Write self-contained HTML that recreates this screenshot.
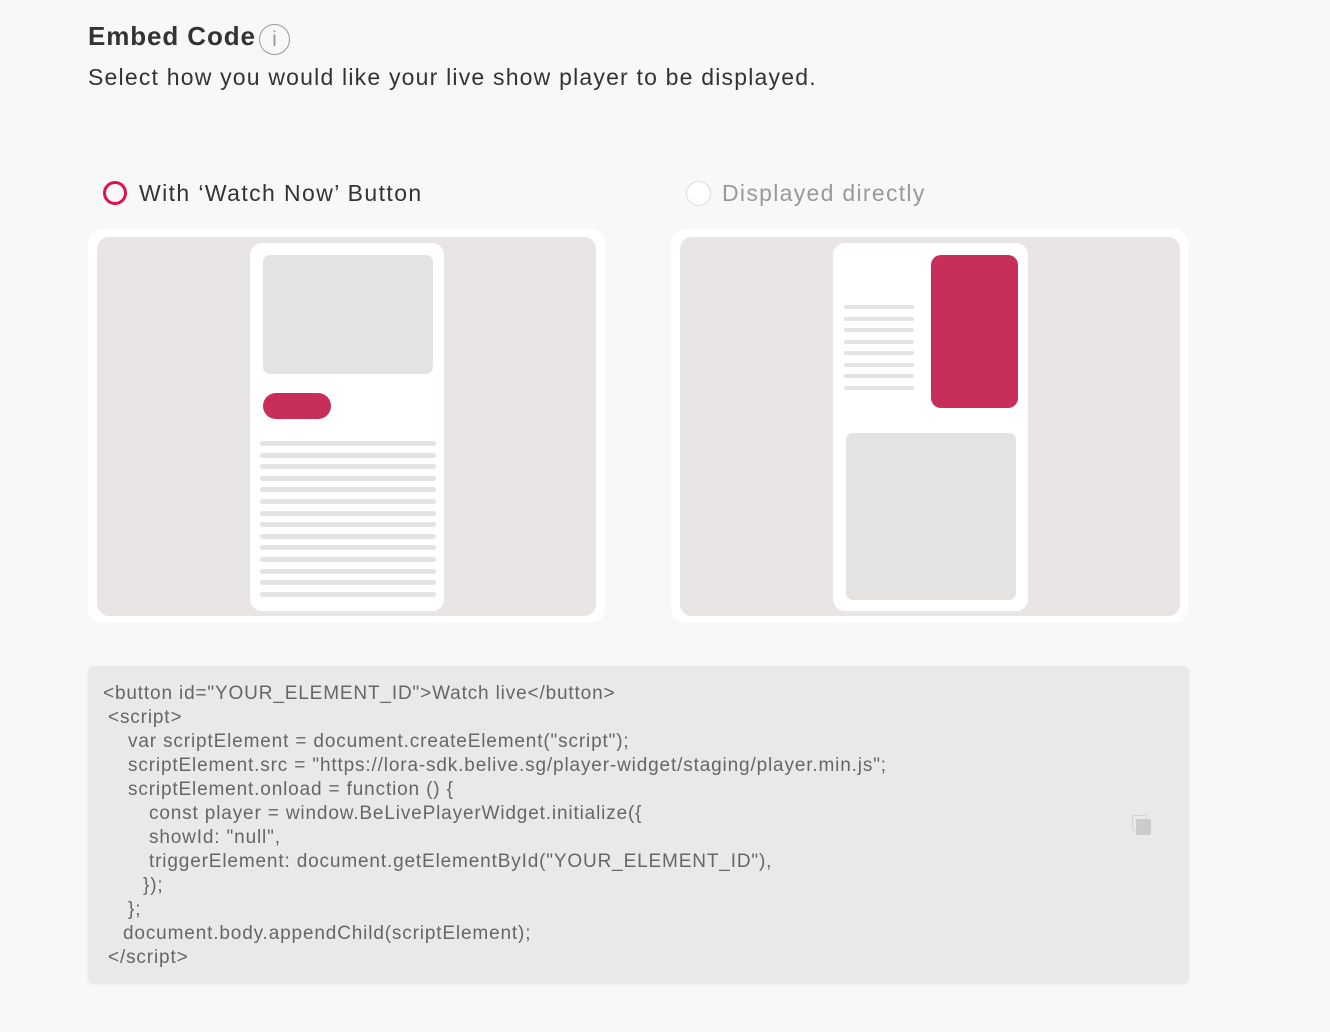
<!DOCTYPE html>
<html><head><style>
body{margin:0;width:1330px;height:1032px;background:#f8f8f8;font-family:"Liberation Sans",sans-serif;position:relative;overflow:hidden}
.a{position:absolute}
h1{position:absolute;left:88px;top:21px;margin:0;font-size:26px;font-weight:bold;color:#333;letter-spacing:0.9px}
.sub{left:88px;top:64px;font-size:23px;color:#333;letter-spacing:1.2px;white-space:nowrap}
.frame{background:#fff;border-radius:14px}
.bg{background:#e8e5e4;border-radius:12px}
.ph{background:#fff;border-radius:12px}
.g{background:#e4e3e2;border-radius:7px}
.ln{background:#e4e3e2;height:5px;border-radius:3px}
.code{left:88px;top:666px;width:1101px;height:317px;background:#e9e9e9;border-radius:6px;box-shadow:0 1px 3px rgba(0,0,0,.08)}
.c{position:absolute;font-size:19px;line-height:24px;color:#666;letter-spacing:0.85px;white-space:nowrap}
</style></head><body>
<h1>Embed Code</h1>
<div class="a" style="left:259px;top:24px;width:29px;height:29px;border:1.5px solid #999;border-radius:50%;color:#999;font-size:21px;text-align:center;line-height:29px">i</div>
<div class="a sub">Select how you would like your live show player to be displayed.</div>

<div class="a" style="left:103px;top:181px;width:18px;height:18px;border:3.5px solid #e0114f;border-radius:50%"></div>
<div class="a" style="left:139px;top:180px;font-size:23px;color:#333;letter-spacing:1.4px">With ‘Watch Now’ Button</div>
<div class="a" style="left:686px;top:181px;width:23px;height:23px;border:1.5px solid #ddd;border-radius:50%;background:#fff"></div>
<div class="a" style="left:722px;top:180px;font-size:23px;color:#999;letter-spacing:1.3px">Displayed directly</div>

<div class="a frame" style="left:88px;top:229px;width:517px;height:394px"></div>
<div class="a bg" style="left:97px;top:237px;width:499px;height:379px"></div>
<div class="a ph" style="left:250px;top:243px;width:194px;height:368px"></div>
<div class="a g" style="left:263px;top:255px;width:170px;height:119px"></div>
<div class="a" style="left:263px;top:393px;width:68px;height:26px;background:#c72e5a;border-radius:13px"></div>
<div class="a" style="left:260px;top:441px;width:176px">
<div class="ln"></div><div class="ln" style="margin-top:6.6px"></div><div class="ln" style="margin-top:6.6px"></div><div class="ln" style="margin-top:6.6px"></div><div class="ln" style="margin-top:6.6px"></div><div class="ln" style="margin-top:6.6px"></div><div class="ln" style="margin-top:6.6px"></div><div class="ln" style="margin-top:6.6px"></div><div class="ln" style="margin-top:6.6px"></div><div class="ln" style="margin-top:6.6px"></div><div class="ln" style="margin-top:6.6px"></div><div class="ln" style="margin-top:6.6px"></div><div class="ln" style="margin-top:6.6px"></div><div class="ln" style="margin-top:6.6px"></div>
</div>

<div class="a frame" style="left:671px;top:229px;width:517px;height:394px"></div>
<div class="a bg" style="left:680px;top:237px;width:500px;height:379px"></div>
<div class="a ph" style="left:833px;top:243px;width:195px;height:368px"></div>
<div class="a" style="left:931px;top:255px;width:87px;height:153px;background:#c72e5a;border-radius:10px"></div>
<div class="a g" style="left:846px;top:433px;width:170px;height:167px"></div>
<div class="a" style="left:844px;top:305px;width:70px">
<div class="ln" style="height:4px"></div><div class="ln" style="height:4px;margin-top:7.5px"></div><div class="ln" style="height:4px;margin-top:7.5px"></div><div class="ln" style="height:4px;margin-top:7.5px"></div><div class="ln" style="height:4px;margin-top:7.5px"></div><div class="ln" style="height:4px;margin-top:7.5px"></div><div class="ln" style="height:4px;margin-top:7.5px"></div><div class="ln" style="height:4px;margin-top:7.5px"></div>
</div>

<div class="a code"></div>
<div class="c" style="left:103px;top:682px">&lt;button id="YOUR_ELEMENT_ID"&gt;Watch live&lt;/button&gt;</div>
<div class="c" style="left:108px;top:706px">&lt;script&gt;</div>
<div class="c" style="left:128px;top:730px">var scriptElement = document.createElement("script");</div>
<div class="c" style="left:128px;top:754px">scriptElement.src = "https://lora-sdk.belive.sg/player-widget/staging/player.min.js";</div>
<div class="c" style="left:128px;top:778px">scriptElement.onload = function () {</div>
<div class="c" style="left:149px;top:802px">const player = window.BeLivePlayerWidget.initialize({</div>
<div class="c" style="left:149px;top:826px">showId: "null",</div>
<div class="c" style="left:149px;top:850px">triggerElement: document.getElementById("YOUR_ELEMENT_ID"),</div>
<div class="c" style="left:143px;top:874px">});</div>
<div class="c" style="left:128px;top:898px">};</div>
<div class="c" style="left:123px;top:922px">document.body.appendChild(scriptElement);</div>
<div class="c" style="left:108px;top:946px">&lt;/script&gt;</div>
<div class="a" style="left:1132px;top:815px;width:13px;height:14px;border:1.5px solid #d4d4d4;border-radius:2px"></div>
<div class="a" style="left:1136px;top:819px;width:15px;height:16px;background:#cbcbcb;border-radius:2px"></div>
</body></html>
